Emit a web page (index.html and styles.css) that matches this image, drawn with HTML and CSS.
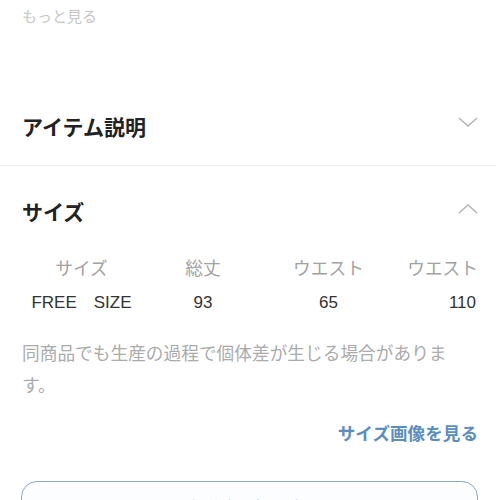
FILE: index.html
```html
<!DOCTYPE html>
<html lang="ja">
<head>
<meta charset="utf-8">
<link rel="stylesheet" href="styles.css">
</head>
<body>
<div class="page">
  <div class="more">もっと見る</div>

  <section class="acc acc-first">
    <div class="acc-head">
      <h2 class="acc-title">アイテム説明</h2>
      <svg class="chev chev-down" width="20" height="10" viewBox="0 0 20 10"><polyline points="1,1 10,9 19,1" fill="none" stroke="#b4b4b4" stroke-width="1.5"/></svg>
    </div>
  </section>

  <section class="acc acc-open">
    <div class="acc-head">
      <h2 class="acc-title">サイズ</h2>
      <svg class="chev chev-up" width="20" height="10" viewBox="0 0 20 10"><polyline points="1,9 10,1 19,9" fill="none" stroke="#b4b4b4" stroke-width="1.5"/></svg>
    </div>

    <div class="size-table">
      <div class="cell th c1">サイズ</div>
      <div class="cell th c2">総丈</div>
      <div class="cell th c3">ウエスト</div>
      <div class="cell th c4">ウエスト</div>
      <div class="cell td c1">FREE　SIZE</div>
      <div class="cell td c2">93</div>
      <div class="cell td c3">65</div>
      <div class="cell td c4 last">110</div>
    </div>

    <p class="note">同商品でも生産の過程で個体差が生じる場合があります。</p>

    <div class="link-row"><a class="link">サイズ画像を見る</a></div>

    <div class="btn">サイズの測り方を確認する</div>
  </section>
</div>
</body>
</html>
```

FILE: styles.css
```css
html, body {
  margin: 0;
  padding: 0;
  background: #ffffff;
}
body {
  font-family: "Liberation Sans", "Noto Sans CJK JP", sans-serif;
  color: #222;
}
.page {
  width: 500px;
  overflow: hidden;
}
.more {
  padding: 8px 22px 0;
  font-size: 15px;
  line-height: 18px;
  color: #c6c6c6;
  height: 18px;
}
.acc-first {
  margin-top: 87px;
  padding-bottom: 22px;
  border-bottom: 1px solid #efefef;
  margin-right: 4px;
}
.acc-head {
  display: flex;
  align-items: center;
  justify-content: space-between;
  padding: 0 22px;
  height: 30px;
}
.acc-first .acc-head {
  padding-right: 18px;
}
.acc-title {
  margin: 0;
  font-size: 21px;
  line-height: 30px;
  font-weight: 700;
  color: #222;
}
.chev {
  display: block;
}
.chev-down {
  margin-top: -12px;
}
.chev-up {
  margin-top: -9px;
}
.acc-open {
  padding-top: 32px;
}
.size-table {
  display: grid;
  grid-template-columns: 119px 124px 127px 1fr;
  grid-auto-rows: 34px;
  margin: 24px 22px 0;
  align-items: center;
  font-size: 17.7px;
}
.cell {
  text-align: center;
  line-height: 34px;
  white-space: nowrap;
}
.c4 {
  text-align: right;
}
.last {
  padding-right: 2px;
}
.th {
  color: #a2a2a2;
}
.td {
  color: #333;
  font-size: 17px;
}
.note {
  margin: 18px 22px 0;
  font-size: 17.7px;
  line-height: 32px;
  color: #ababab;
}
.link-row {
  display: flex;
  justify-content: flex-end;
  padding: 0 22px;
  margin-top: 20px;
}
.link {
  font-size: 17.6px;
  line-height: 24px;
  color: #5b8dc0;
  font-weight: 700;
}
.btn {
  margin: 35px 22px 0 21px;
  height: 52px;
  border: 1.5px solid #8ca7c3;
  border-radius: 16px;
  background: #fbfdfe;
  display: flex;
  align-items: center;
  justify-content: center;
  font-size: 17.7px;
  color: #b8c8d6;
  box-sizing: border-box;
}
```
